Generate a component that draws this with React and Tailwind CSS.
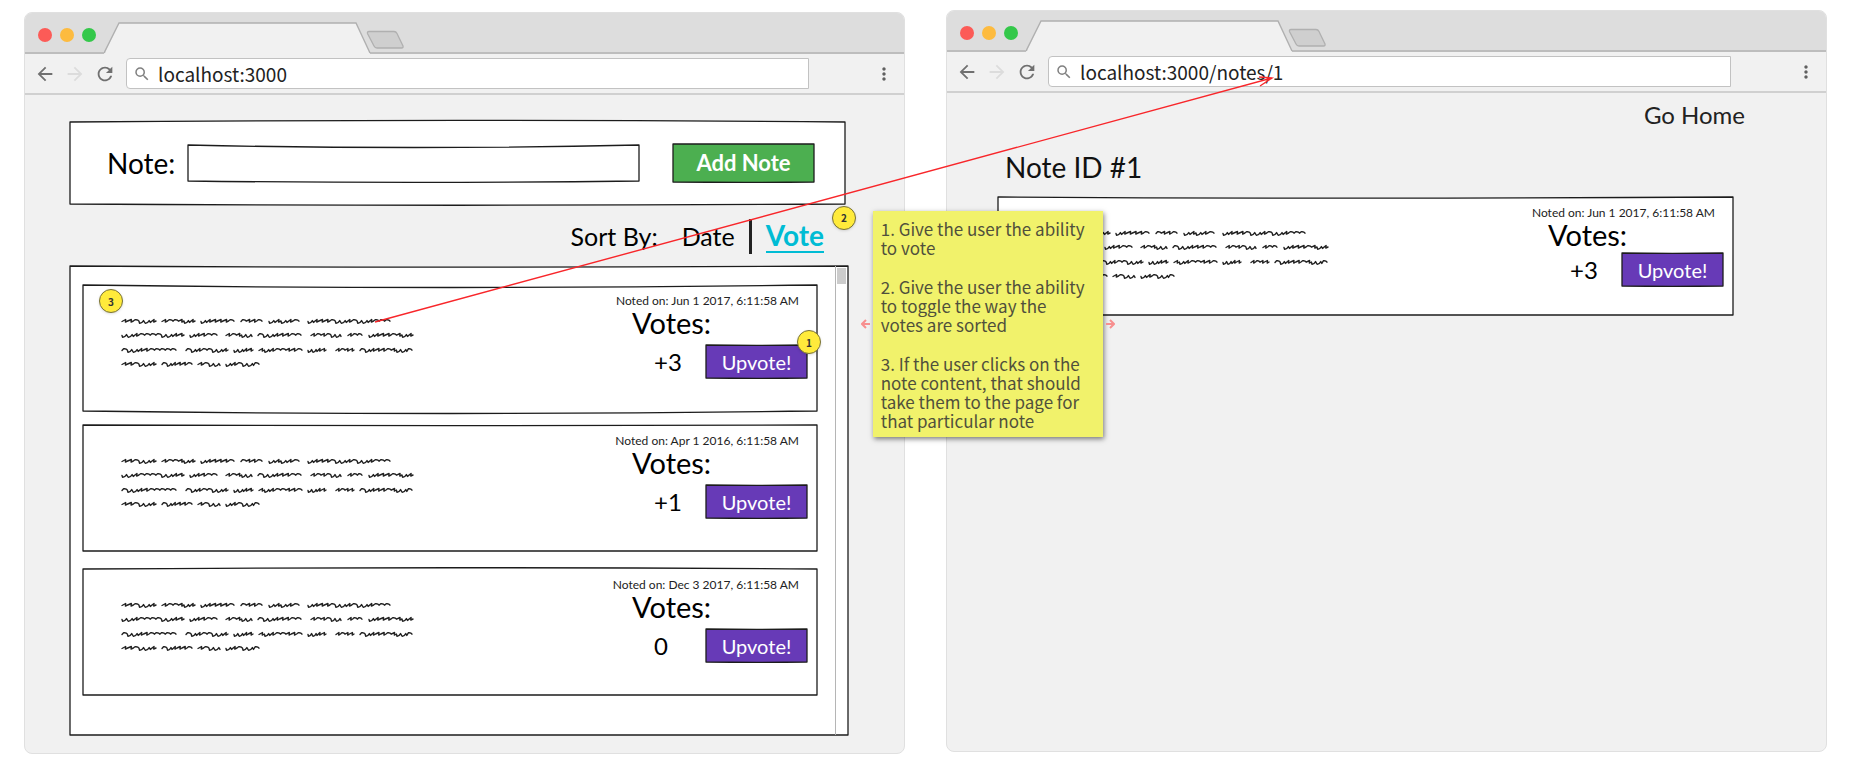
import React from "react";
import { MdArrowBack, MdArrowForward, MdRefresh, MdSearch, MdMoreVert } from "react-icons/md";

const HAND = "font-['Lato',sans-serif]";
const PRINT = "font-['Noto_Sans_CJK_SC',sans-serif]";

/* Hand-drawn rectangle: top and bottom sides bow by a few pixels. */
function SketchFrame({ fill = "#ffffff", stroke = "#1c1c1c", top = 0, bottom = 0 }) {
  return (
    <svg className="pointer-events-none absolute inset-0 h-full w-full overflow-visible" viewBox="0 0 100 100" preserveAspectRatio="none" aria-hidden="true">
      <path
        d={`M0 0 Q50 ${top} 100 0 L100 100 Q50 ${100 + bottom} 0 100 Z`}
        fill={fill}
        stroke={stroke}
        strokeWidth="1.3"
        strokeLinejoin="round"
        vectorEffect="non-scaling-stroke"
      />
    </svg>
  );
}

/* Each word is [start, end, letters]; n = arch, s = slanted tick, u = low hook. */
const SCRIBBLE = [
  { y: 6, words: [[1, 35, "ssnuus"], [41, 74, "snnsus"], [80, 113, "ussssn"], [120, 141, "nssn"], [148, 178, "ususn"], [187, 269, "usssnuusnuusnnn"]] },
  { y: 20, words: [[1, 63, "uusnnnnuuss"], [69, 96, "ussnn"], [105, 131, "snsuu"], [137, 180, "nuusssnn"], [190, 220, "snsnuu"], [227, 241, "snn"], [248, 292, "usssnsus"]] },
  { y: 35, words: [[1, 55, "nuussnnnnn"], [65, 107, "nusnnuus"], [113, 132, "uuss"], [138, 181, "susnnssn"], [187, 205, "uuss"], [215, 233, "snss"], [239, 291, "nusssnsuun"]] },
  { y: 49, words: [[1, 35, "ssnuus"], [41, 71, "nusssn"], [77, 99, "snuu"], [105, 138, "usnuun"]] },
];

function wordPath([start, end, letters], y) {
  const w = (end - start) / letters.length;
  let d = `M${start} ${y + 0.5}`;
  letters.split("").forEach((kind, i) => {
    const x = start + i * w;
    if (kind === "n") d += ` L${x + w * 0.3} ${y - 1.2} Q${x + w * 0.8} ${y - 1.6} ${x + w} ${y + 0.2}`;
    if (kind === "s") d += ` L${x + w * 0.65} ${y - 1.5} L${x + w * 0.6} ${y + 1.1} L${x + w} ${y}`;
    if (kind === "u") d += ` L${x + w * 0.1} ${y + 2.2} Q${x + w * 0.5} ${y + 2.4} ${x + w * 0.8} ${y - 0.4} L${x + w} ${y + 1.4}`;
  });
  return d;
}

function Scribble() {
  return (
    <svg width="294" height="56" viewBox="0 0 294 56" fill="none" stroke="#222222" strokeWidth="1.4" strokeLinejoin="round" strokeLinecap="round" aria-hidden="true">
      {SCRIBBLE.map((line) => line.words.map((word) => <path key={`${line.y}-${word[0]}`} d={wordPath(word, line.y)} />))}
    </svg>
  );
}

function BrowserWindow({ id, url, className, children }) {
  return (
    <section className={`flex min-w-0 flex-1 flex-col overflow-hidden rounded-lg border border-[#e0e0e0] bg-[#f1f1f1] ${className}`}>
      <div className="flex h-[41px] shrink-0 items-end border-b-2 border-[#bdbdbd] bg-[#dddddd]">
        <div className="flex items-center gap-2 self-stretch pl-[13px] pt-1">
          <span className="size-3.5 rounded-full bg-[#fc5b57]" />
          <span className="size-3.5 rounded-full bg-[#fdbb3f]" />
          <span className="size-3.5 rounded-full bg-[#34c84a]" />
        </div>
        <svg className="-mb-0.5 ml-2 shrink-0" width="304" height="32" viewBox="0 0 304 32" fill="none" aria-hidden="true">
          <path d="M0 32 V31 L1 31 L15 1 H252 L266 31 V32 Z" fill="#f1f1f1" />
          <path d="M0 31 L15 1 H252 L266 31" stroke="#b0b0b0" strokeWidth="1.4" />
          <path d="M265 9.5 H290 Q292 9.5 293 11.5 L299 24 Q299.5 26 297.5 26 H273 Q271 26 270 24 L263.5 11.5 Q263 9.5 265 9.5 Z" fill="#cfcfcf" stroke="#b0b0b0" strokeWidth="1.3" />
        </svg>
      </div>
      <div className="flex h-[41px] shrink-0 items-center border-b-2 border-[#d0d0d0] pl-[9px] pr-2.5">
        <button type="button" aria-label="Back" className="mr-2"><MdArrowBack className="size-[22px] text-[#707070]" /></button>
        <button type="button" aria-label="Forward" className="mr-2"><MdArrowForward className="size-[22px] text-[#dcdcdc]" /></button>
        <button type="button" aria-label="Reload" className="mr-2.5"><MdRefresh className="size-[22px] text-[#707070]" /></button>
        <label htmlFor={id} className="flex h-[31px] flex-1 items-center rounded-l border border-[#c2c2c2] bg-white pl-1.5">
          <MdSearch className="size-[18px] shrink-0 text-[#808080]" aria-label="Address" />
          <input id={id} type="text" defaultValue={url} className={`ml-[7px] min-w-0 flex-1 bg-transparent text-[19px] leading-7 text-[#222222] outline-none ${PRINT}`} />
        </label>
        <button type="button" aria-label="Menu" className="ml-[65px]"><MdMoreVert className="size-5 text-[#606060]" /></button>
      </div>
      {children}
    </section>
  );
}

function Marker({ children, className }) {
  return (
    <span className={`absolute z-10 flex size-6 items-center justify-center rounded-full border border-[#77713a] bg-[#ffeb3b] text-[10px] font-bold text-[#333333] shadow-sm ${PRINT} ${className}`}>
      {children}
    </span>
  );
}

function NoteCard({ date, votes, top, bottom, compact, contentMarker, voteMarker }) {
  return (
    <article className={`relative flex justify-between pl-[38px] pr-2.5 pt-2 ${compact ? "pb-[29px]" : "pb-[33px]"}`}>
      <SketchFrame top={top} bottom={bottom} />
      <a href="#note" aria-label="Open note" className="relative mt-[22px] shrink-0"><Scribble /></a>
      <div className="relative w-[212px]">
        <p className="pr-2 text-right text-[12px] leading-4 text-[#222222]">{date}</p>
        <p className="pl-[37px] text-[29px] leading-7 text-black">Votes:</p>
        <div className={`flex items-center justify-end ${compact ? "pt-1" : "pt-2"}`}>
          <span className="w-8 shrink-0 text-[24px] leading-8 text-black">{votes}</span>
          <button type="button" className="relative ml-5 h-[33px] w-[101px] shrink-0 text-[20px] leading-7 text-white">
            <SketchFrame fill="#673ab7" top={2} bottom={2} />
            <span className="relative">Upvote!</span>
          </button>
        </div>
      </div>
      {contentMarker && <Marker className="left-4 top-1">{contentMarker}</Marker>}
      {voteMarker && <Marker className="-right-1 top-[45px]">{voteMarker}</Marker>}
    </article>
  );
}

function HomePage() {
  return (
    <div className={`flex flex-1 flex-col pb-[18px] pl-[45px] pr-14 pt-[27px] ${HAND}`}>
      <form className="relative mr-[3px] flex items-center px-[31px] py-[22px]" onSubmit={(e) => e.preventDefault()}>
        <SketchFrame top={-4} bottom={3} />
        <label htmlFor="note" className="relative w-[87px] pl-1.5 text-[28px] leading-8 text-black">Note:</label>
        <span className="relative h-9 flex-1">
          <SketchFrame top={14} bottom={8} />
          <input id="note" type="text" className="relative h-full w-full bg-transparent px-2 text-xl outline-none" />
        </span>
        <button type="submit" className="relative ml-[34px] h-[38px] w-[141px] text-[22px] font-bold leading-7 text-white">
          <SketchFrame fill="#4caf50" bottom={2} />
          <span className="relative">Add Note</span>
        </button>
      </form>
      <nav className="relative flex items-center justify-end pb-3 pr-6 pt-3.5 text-[25px] leading-9 text-black">
        <span className="mr-6">Sort By:</span>
        <button type="button">Date</button>
        <span className="mx-3.5 h-[35px] w-[3px] bg-[#222222]" />
        <a href="#vote" className="border-b-2 border-[#00bcd4] text-[28px] font-bold leading-8 text-[#00bcd4]">Vote</a>
        <Marker className="-right-2 top-0.5">2</Marker>
      </nav>
      <div className="relative flex flex-1">
        <SketchFrame top={0.5} />
        <div className="relative flex flex-1 flex-col pb-9 pl-[13px] pr-[18px] pt-[19px]">
          <NoteCard date="Noted on: Jun 1 2017, 6:11:58 AM" votes="+3" top={4} bottom={4} contentMarker="3" voteMarker="1" />
          <div className="h-3.5" />
          <NoteCard date="Noted on: Apr 1 2016, 6:11:58 AM" votes="+1" top={1} bottom={0} />
          <div className="h-[18px]" />
          <NoteCard date="Noted on: Dec 3 2017, 6:11:58 AM" votes="0" top={-2} bottom={0} />
        </div>
        <div className="relative flex w-[13px] flex-col border-l border-[#b5b5b5] p-px pr-0.5 pt-0.5">
          <div className="h-4 bg-[#cccccc]" />
        </div>
      </div>
    </div>
  );
}

function NotePage() {
  return (
    <div className={`flex flex-1 flex-col pl-[51px] pr-[93px] pt-1 ${HAND}`}>
      <a href="#home" className="-mr-3 self-end text-[24px] leading-9 text-[#222222]">Go Home</a>
      <h1 className="mb-3 mt-4 pl-[7px] text-[28px] leading-9 text-[#111111]">Note ID #1</h1>
      <NoteCard compact date="Noted on: Jun 1 2017, 6:11:58 AM" votes="+3" top={2} bottom={0} />
    </div>
  );
}

function StickyNote() {
  return (
    <aside className="absolute left-[47.2%] top-[211px] z-20 flex w-[230px] items-center">
      <svg className="absolute -left-3 top-[108px]" width="10" height="10" viewBox="0 0 10 10" fill="none" stroke="#f78f8f" strokeWidth="2" aria-hidden="true"><path d="M9 5H2M5 1L1 5L5 9" /></svg>
      <div className={`flex-1 bg-[#f1f26b] px-2 pb-[7px] pt-2 text-[17px] leading-[19px] text-[#50503c] shadow-[1px_2px_5px_rgba(0,0,0,0.5)] ${PRINT}`}>
        <p className="mb-5">1. Give the user the ability<br />to vote</p>
        <p className="mb-5">2. Give the user the ability<br />to toggle the way the<br />votes are sorted</p>
        <p>3. If the user clicks on the<br />note content, that should<br />take them to the page for<br />that particular note</p>
      </div>
      <svg className="absolute -right-3 top-[108px]" width="10" height="10" viewBox="0 0 10 10" fill="none" stroke="#f78f8f" strokeWidth="2" aria-hidden="true"><path d="M1 5H8M5 1L9 5L5 9" /></svg>
    </aside>
  );
}

export default function App() {
  return (
    <main className="relative flex min-h-screen gap-[41px] bg-white pl-6 pr-[22px]">
      <BrowserWindow id="url-home" url="localhost:3000" className="mb-3.5 mt-3">
        <HomePage />
      </BrowserWindow>
      <BrowserWindow id="url-note" url="localhost:3000/notes/1" className="mb-4 mt-2.5">
        <NotePage />
      </BrowserWindow>
      <svg className="pointer-events-none absolute left-0 top-0 z-10 h-[768px] w-full" viewBox="0 0 1849 768" preserveAspectRatio="none" fill="none" stroke="#f8262a" strokeWidth="1.4" aria-hidden="true">
        <path d="M375 322 L1272 78 M1259 77 L1272 78 L1260 86" />
      </svg>
      <StickyNote />
    </main>
  );
}
